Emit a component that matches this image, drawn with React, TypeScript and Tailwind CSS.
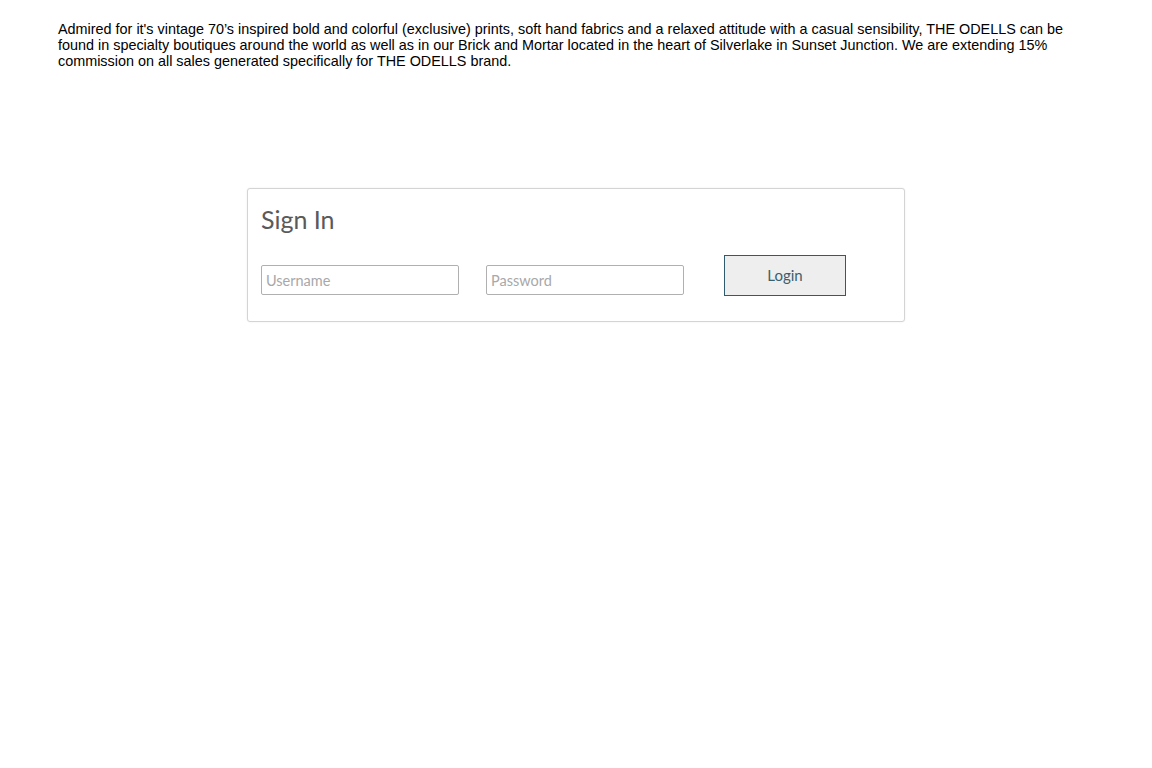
export default function App() {
  return (
    <div className="min-h-[768px] bg-white">
      <p
        className="px-[58px] pt-[21px] text-[14.4px] leading-[16px] text-black"
        style={{ fontFamily: '"Liberation Sans", Arial, sans-serif' }}
      >
        Admired for it's vintage 70’s inspired bold and colorful (exclusive) prints, soft hand fabrics and a relaxed attitude with a casual sensibility, THE ODELLS can be found in specialty boutiques around the world as well as in our Brick and Mortar located in the heart of Silverlake in Sunset Junction. We are extending 15% commission on all sales generated specifically for THE ODELLS brand.
      </p>
      <div className="mt-[119px] flex justify-center">
        <div
          className="w-[658px] h-[134px] rounded-[3px] border border-[#d4d4d4] bg-white px-[13px] pt-[15px] shadow-[0_0_2px_rgba(0,0,0,0.08)]"
          style={{ fontFamily: 'Lato, "Open Sans", sans-serif' }}
        >
          <h2 className="text-[25px] leading-[30px] font-normal text-[#5a5a5a]">Sign In</h2>
          <div className="mt-[21px] flex items-end">
            <input
              placeholder="Username"
              className="w-[198px] h-[30px] rounded-[2px] border border-[#b0b0b0] px-[4px] text-[14.5px] text-[#555] placeholder:text-[#a8a8a8] outline-none"
            />
            <input
              type="password"
              placeholder="Password"
              className="ml-[27px] w-[198px] h-[30px] rounded-[2px] border border-[#b0b0b0] px-[4px] text-[14.5px] text-[#555] placeholder:text-[#a8a8a8] outline-none"
            />
            <button className="ml-[40px] mb-[-1px] w-[122px] h-[41px] border border-[#2e5c6e] bg-[#eeeeee] text-[15px] text-[#3a5f6f]">
              Login
            </button>
          </div>
        </div>
      </div>
    </div>
  );
}
